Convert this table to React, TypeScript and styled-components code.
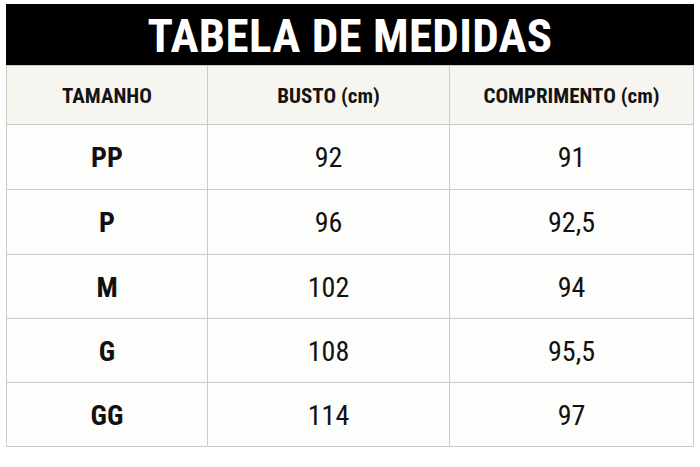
import React from "react";
import styled, { createGlobalStyle } from "styled-components";

const GlobalStyle = createGlobalStyle`
  html, body { margin: 0; padding: 0; background: #ffffff; }
  body { font-family: "Roboto Condensed", "Roboto", "Liberation Sans", sans-serif; }
`;

const Page = styled.div`
  width: 700px;
  height: 467px;
  box-sizing: border-box;
  padding: 4px 6px 0 6px;
  background: #ffffff;
`;

const Card = styled.div`
  display: flex;
  flex-direction: column;
  width: 688px;
`;

const TitleBar = styled.div`
  height: 61px;
  background: #000000;
  display: flex;
  align-items: center;
  justify-content: center;
  color: #ffffff;
  font-family: "Roboto Condensed", "Roboto", sans-serif;
  font-weight: 700;
  font-size: 47px;
  letter-spacing: 0.3px;
  line-height: 1;
  padding-top: 2px;
  box-sizing: border-box;
`;

const Grid = styled.div`
  display: grid;
  grid-template-columns: 200px 241px 1fr;
  grid-template-rows: 58px 64px 64px 63px 63px 63px;
  gap: 1px;
  background: #cbcbcb;
  border: 1px solid #cbcbcb;
  border-top: none;
  padding-top: 1px;
`;

const HeadCell = styled.div`
  background: #f7f5f0;
  display: flex;
  align-items: center;
  justify-content: center;
  font-family: "Roboto Condensed", "Roboto", sans-serif;
  font-weight: 700;
  font-size: 21px;
  color: #141414;
  padding-top: 1px;
`;

const Cell = styled.div<{ $strong?: boolean }>`
  background: #fdfdfc;
  display: flex;
  align-items: center;
  justify-content: center;
  font-family: "Roboto Condensed", "Roboto", sans-serif;
  font-weight: ${(p) => (p.$strong ? 700 : 400)};
  font-size: ${(p) => (p.$strong ? "28px" : "28px")};
  color: #111111;
  padding-top: 1px;
`;

const rows: [string, string, string][] = [
  ["PP", "92", "91"],
  ["P", "96", "92,5"],
  ["M", "102", "94"],
  ["G", "108", "95,5"],
  ["GG", "114", "97"],
];

export default function App() {
  return (
    <>
      <GlobalStyle />
      <Page>
        <Card>
          <TitleBar>TABELA DE MEDIDAS</TitleBar>
          <Grid>
            <HeadCell>TAMANHO</HeadCell>
            <HeadCell>BUSTO (cm)</HeadCell>
            <HeadCell>COMPRIMENTO (cm)</HeadCell>
            {rows.map(([size, bust, length]) => (
              <React.Fragment key={size}>
                <Cell $strong>{size}</Cell>
                <Cell>{bust}</Cell>
                <Cell>{length}</Cell>
              </React.Fragment>
            ))}
          </Grid>
        </Card>
      </Page>
    </>
  );
}
